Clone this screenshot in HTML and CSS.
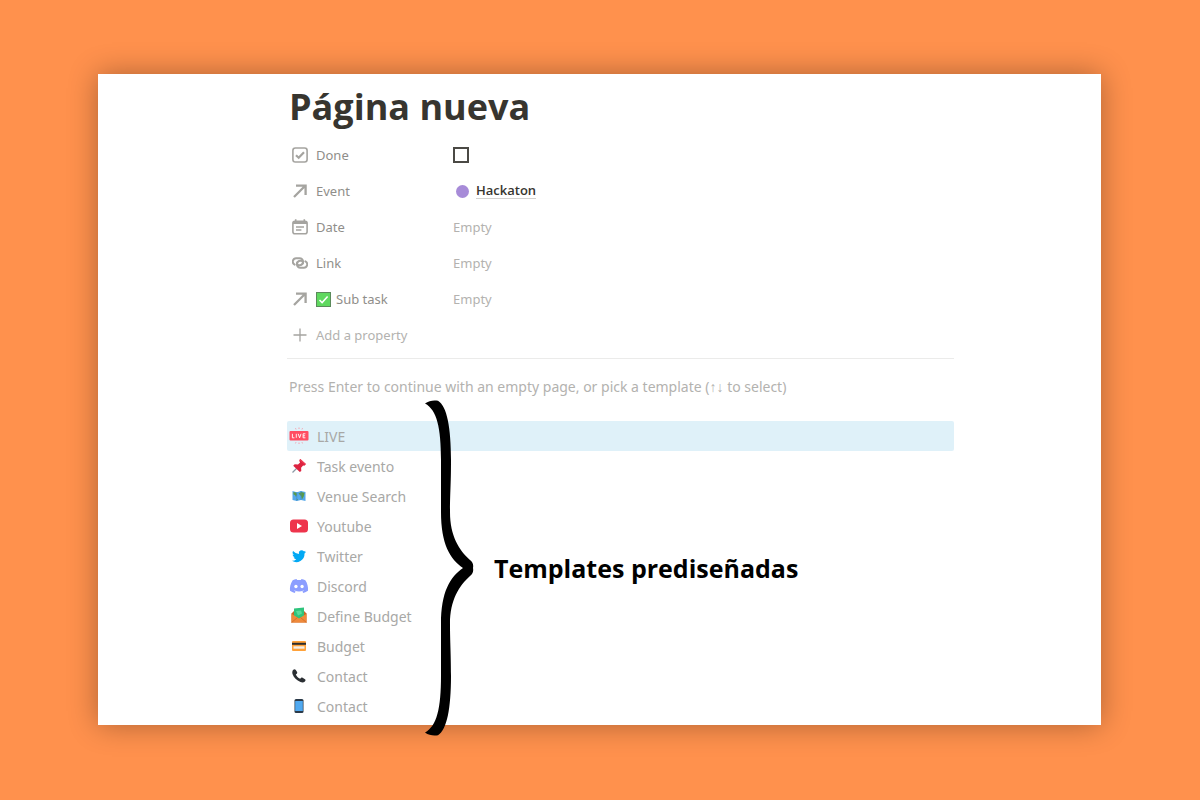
FILE: index.html
```
<!DOCTYPE html>
<html lang="es">
<head>
    <meta charset="UTF-8">
    <meta name="viewport" content="width=device-width, initial-scale=1.0">
    <title>Página nueva</title>
    <link rel="stylesheet" href="styles.css">
</head>
<body>
    <main class="card">
        <div class="page">
            <h1 class="title">Página nueva</h1>

            <div class="properties">
                <div class="property">
                    <label class="name" for="done">
                        <svg class="icon" viewBox="0 0 16 16" fill="none" stroke="currentColor" stroke-width="1.6"><rect x="0.9" y="1" width="14.2" height="14" rx="2.5"/><path d="M4 8.2l2.7 2.6L12 5.2" stroke-width="2.2"/></svg>
                        Done
                    </label>
                    <input class="check" type="checkbox" id="done">
                </div>
                <div class="property">
                    <span class="name">
                        <svg class="icon" viewBox="0 0 16 16" fill="none" stroke="currentColor" stroke-width="2.3"><path d="M2 14L13.2 2.8M4 2.6h9.6v9.4"/></svg>
                        Event
                    </span>
                    <a class="relation" href="#"><span class="dot"></span><span class="relation-text">Hackaton</span></a>
                </div>
                <div class="property">
                    <span class="name">
                        <svg class="icon" viewBox="0 0 16 16" fill="none" stroke="currentColor" stroke-width="1.6"><rect x="0.9" y="2.2" width="14.2" height="12.6" rx="2"/><path d="M1 3.7h14" stroke-width="2.6"/><path d="M3.7 0.3v3M12.3 0.3v3M4 8h8M4 11h5.4"/></svg>
                        Date
                    </span>
                    <span class="empty">Empty</span>
                </div>
                <div class="property">
                    <span class="name">
                        <svg class="icon" viewBox="0 0 16 16" fill="none" stroke="currentColor" stroke-width="2" stroke-linecap="round"><path d="M2.6 9.6A3.4 3.4 0 0 1 4.4 3.2H7.6A3.5 3.5 0 0 1 7.6 10.2H6.8A1.9 1.9 0 0 1 5.3 7.4"/><path d="M13.4 6.4A3.4 3.4 0 0 1 11.6 12.8H8.4A3.5 3.5 0 0 1 8.4 5.8H9.2A1.9 1.9 0 0 1 10.7 8.6"/></svg>
                        Link
                    </span>
                    <span class="empty">Empty</span>
                </div>
                <div class="property">
                    <span class="name">
                        <svg class="icon" viewBox="0 0 16 16" fill="none" stroke="currentColor" stroke-width="2.3"><path d="M2 14L13.2 2.8M4 2.6h9.6v9.4"/></svg>
                        <svg class="tick" viewBox="0 0 15 15"><rect x="0.5" y="0.5" width="14" height="14" fill="#5fd85f" stroke="#5b8a5b"/><path d="M3.5 8l2.6 2.6L11.6 4.4" fill="none" stroke="#fff" stroke-width="1.5"/></svg>
                        Sub task
                    </span>
                    <span class="empty">Empty</span>
                </div>
                <button class="add" type="button">
                    <svg class="icon" viewBox="0 0 16 16" fill="none" stroke="currentColor" stroke-width="1.3"><path d="M8 1.5v13M1.5 8h13"/></svg>
                    Add a property
                </button>
            </div>

            <p class="hint">Press Enter to continue with an empty page, or pick a template (↑↓ to select)</p>

            <div class="templates">
                <button class="template selected" type="button">
                    <svg class="emoji" viewBox="0 0 20 20"><rect x="0.5" y="5" width="19" height="9.4" rx="1" fill="#ff4d62"/><g fill="none" stroke="#fff" stroke-width="0.9"><path d="M3.4 7.8v4h2M7.3 7.8v4M9.2 7.8l1.4 4 1.4-4M16.4 7.8h-2.3v4h2.3M14.1 9.8h2"/></g><path d="M10 1.5V3M6.5 2.2l.5 1.2M13.5 2.2L13 3.4M10 16.5V18M6.5 17.4l.5-1.2M13.5 17.4l-.5-1.2" stroke="#f5a0ac"/></svg>
                    LIVE
                </button>
                <button class="template" type="button">
                    <svg class="emoji" viewBox="0 0 20 20"><path d="M3.5 16.5L9 11" stroke="#8b9aa5" stroke-width="1.3"/><path d="M11.3 3l5.6 5-1.5 1.7-1.3-.2-2 2.2.2 3.2-1.5 1.2L4.2 9.8l1.5-1.5 3.3.1 2.1-2-.9-1.7z" fill="#dd2340"/><path d="M11.3 3l5.6 5-.8.7-5.7-4.6z" fill="#ef4056"/></svg>
                    Task evento
                </button>
                <button class="template" type="button">
                    <svg class="emoji" viewBox="0 0 20 20"><path d="M3.5 5l4.3 1.2L12 5l4.5 1v9L12 14l-4.2 1-4.3-1z" fill="#55a8ea"/><path d="M4.500 6l3 .8.5 2L7 11l-1-2-1.500-.5zM9.500 7.500l3-1.500 3 1-.8 3.500-1.700 3-1-3.500zM7.500 12.500l1.500 1-1 .8z" fill="#5a9a48"/><path d="M7.8 6.2V15M12 5v9" stroke="#3b88c3" stroke-width="0.6"/></svg>
                    Venue Search
                </button>
                <button class="template" type="button">
                    <svg class="emoji" viewBox="0 0 20 20"><rect x="1" y="3.5" width="18" height="13" rx="3.5" fill="#ee344c"/><path d="M8 7l5 3-5 3z" fill="#fff"/></svg>
                    Youtube
                </button>
                <button class="template" type="button">
                    <svg class="emoji" viewBox="0 0 24 24"><path d="M20.3 6.9c-.6.3-1.2.5-1.9.6.7-.4 1.2-1.1 1.5-1.9-.7.4-1.4.7-2.1.8a3.4 3.4 0 0 0-5.9 3.1A9.8 9.8 0 0 1 4.9 6a3.4 3.4 0 0 0 1.1 4.6c-.6 0-1.1-.2-1.6-.4 0 1.6 1.2 3 2.8 3.3-.5.2-1 .2-1.6.1.5 1.4 1.7 2.3 3.2 2.3A7 7 0 0 1 3.5 17.7a9.8 9.8 0 0 0 15.1-8.7c.7-.5 1.3-1.2 1.7-2.1z" fill="#03a9f4"/></svg>
                    Twitter
                </button>
                <button class="template" type="button">
                    <svg class="emoji" viewBox="0 0 24 24"><path d="M19.6 5A18 18 0 0 0 15 3.6l-.7 1.3a17 17 0 0 0-4.6 0L9 3.6A18 18 0 0 0 4.4 5C1.6 9.3.8 13.5 1.2 17.7a18 18 0 0 0 5.6 2.7L8 18.6l-1.9-.9.5-.4a13 13 0 0 0 10.8 0l.5.4-1.9.9 1.2 1.8a18 18 0 0 0 5.6-2.7c.5-4.9-.8-9.1-3.2-12.7z" fill="#8c9eff"/><ellipse cx="8.3" cy="12.6" rx="2" ry="2.2" fill="#fff"/><ellipse cx="15.7" cy="12.6" rx="2" ry="2.2" fill="#fff"/></svg>
                    Discord
                </button>
                <button class="template" type="button">
                    <svg class="emoji" viewBox="0 0 20 20"><path d="M2.5 7.5L5 5h10l2.5 2.5v9h-15z" fill="#c96525"/><path d="M5 2.5l10-1v9L10 14l-5-3z" fill="#2fc47c"/><path d="M7 5l5-.5 1 3-4 2z" fill="#58dc9b"/><path d="M2.5 7.8l7.5 4.7 7.5-4.7v8.7h-15z" fill="#ef8a3b"/><path d="M2.5 16.5l6-5M17.5 16.5l-6-5" stroke="#cf6c26" stroke-width="0.8"/></svg>
                    Define Budget
                </button>
                <button class="template" type="button">
                    <svg class="emoji" viewBox="0 0 20 20"><rect x="3" y="5" width="14" height="10" rx="1" fill="#ffa23a"/><path d="M3 7.8h14" stroke="#2d2d2d" stroke-width="2"/><rect x="4.5" y="10.3" width="11" height="2.4" fill="#f3efe9"/></svg>
                    Budget
                </button>
                <button class="template" type="button">
                    <svg class="emoji" viewBox="0 0 20 20"><path d="M4.3 3.8c1-.9 1.7-.8 2.3-.1l1.5 2.4c.3.6.2 1.2-.3 1.6l-1 .8c.9 2 2.2 3.3 4.3 4.3l.9-.9c.5-.5 1-.6 1.6-.2l2.4 1.6c.8.6.7 1.3-.1 2.1-1 1.1-2.6 1.4-4.4.7C7.5 14.5 4.9 11.6 3.6 8.3c-.6-1.8-.3-3.6.7-4.5z" fill="#2b2f33"/></svg>
                    Contact
                </button>
                <button class="template" type="button">
                    <svg class="emoji" viewBox="0 0 20 20"><rect x="5.5" y="3" width="9" height="14" rx="1.5" fill="#2b3a49"/><rect x="6.2" y="5" width="7.6" height="10" fill="#50a9f0"/></svg>
                    Contact
                </button>

                <div class="note">
                    <svg class="brace" viewBox="0 0 50 336"><path d="M0 3.500C4 .5 9 0 13 .8C22 6 26 28 26 60C26 85 25 93 25 112C25 136 34 150 45 160Q49 163 48 168Q49 173 45 176C34 186 25 200 25 224C25 243 26 251 26 276C26 308 22 330 13 335.200C9 336 4 335.500 0 332.500C12 326 16 308 16 276C16 251 16 243 16 224C16 192 25 177 38 168C25 159 16 144 16 112C16 93 16 85 16 60C16 28 12 10 0 3.500Z"/></svg>
                    <strong class="note-text">Templates prediseñadas</strong>
                </div>
            </div>
        </div>
    </main>
</body>
</html>
```
FILE: styles.css
```
*{
    margin: 0;
    padding: 0;
    box-sizing: border-box;
}
body{
    min-height: 100vh;
    padding: 74px 99px 74px 98px;
    background: #ff914d;
    font-family: "Noto Sans", "Open Sans", sans-serif;
    font-size: 14px;
    color: #37352f;
}
button{
    border: none;
    background: none;
    font: inherit;
    text-align: left;
    cursor: pointer;
}
.card{
    padding: 8px 147px 4px 189px;
    background: #fff;
    box-shadow: 0 0 28px rgba(0, 0, 0, .32);
}
.title{
    padding: 0 2px 5px;
    font-family: "Open Sans", sans-serif;
    font-size: 36px;
    font-weight: 700;
    line-height: 50px;
}

.properties{
    padding-bottom: 5px;
    border-bottom: 1px solid #ebebea;
    font-size: 13px;
}
.property,
.add{
    display: flex;
    align-items: center;
    height: 36px;
    padding-left: 5px;
}
.name{
    display: flex;
    align-items: center;
    width: 161px;
    color: #8f8e8a;
}
.icon{
    width: 16px;
    height: 16px;
    margin-right: 8px;
    color: #a5a4a0;
}
.tick{
    width: 15px;
    height: 15px;
    margin-right: 5px;
}
.check{
    appearance: none;
    width: 16px;
    height: 16px;
    border: 2px solid #4b4a45;
}
.relation{
    display: flex;
    align-items: center;
    padding-left: 3px;
    color: inherit;
    text-decoration: none;
}
.dot{
    width: 13px;
    height: 13px;
    margin-right: 7px;
    border-radius: 50%;
    background: #a78bd8;
}
.relation-text{
    border-bottom: 1px solid #d3d2d0;
    font-family: "Open Sans", sans-serif;
    font-weight: 600;
    line-height: 15px;
}
.empty,
.add,
.hint{
    color: #b3b2af;
}

.hint{
    padding: 16px 2px 22px;
    line-height: 24px;
}

.templates{
    position: relative;
}
.template{
    display: flex;
    align-items: center;
    width: 100%;
    height: 30px;
    padding-left: 2px;
    border-radius: 2px;
    color: #a8a8a6;
}
.selected{
    background: #dff1f9;
}
.emoji{
    width: 20px;
    height: 20px;
    margin-right: 8px;
}

/* brace and caption over the list */
.note{
    position: absolute;
    top: -21px;
    left: 138px;
    display: flex;
    align-items: center;
    gap: 19px;
    color: #000;
}
.brace{
    width: 50px;
    height: 336px;
}
.note-text{
    font-family: "Open Sans", sans-serif;
    font-size: 25px;
}
```
